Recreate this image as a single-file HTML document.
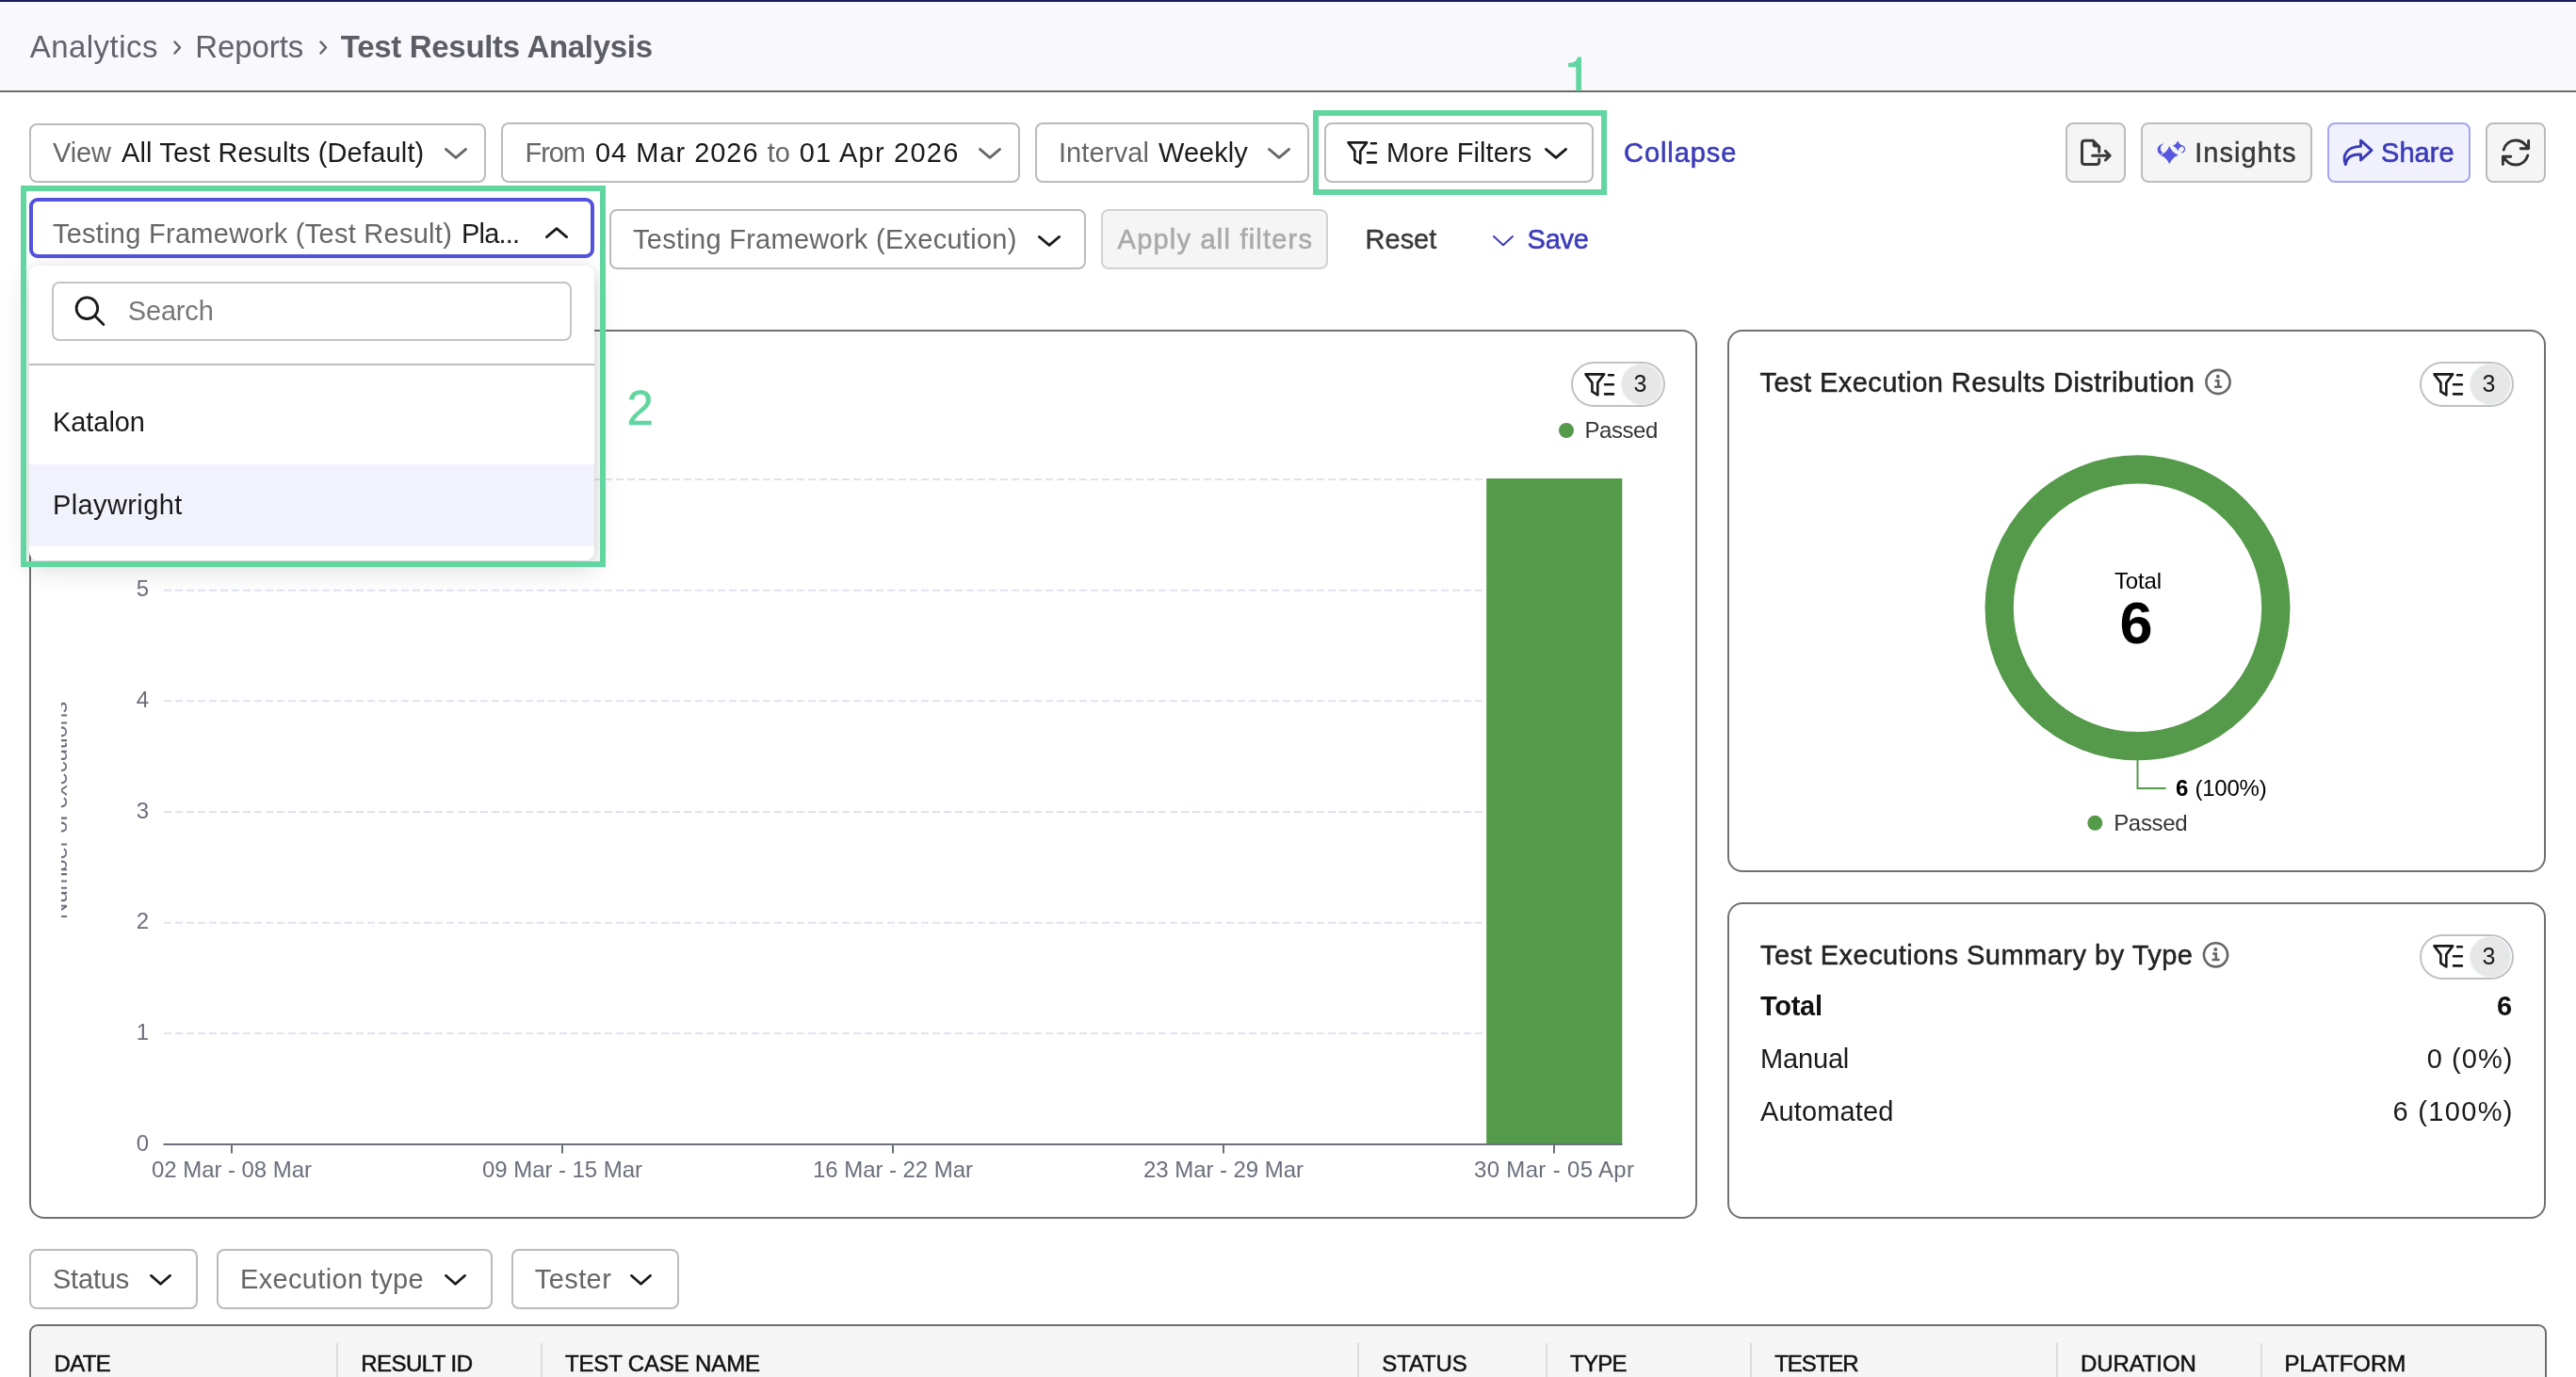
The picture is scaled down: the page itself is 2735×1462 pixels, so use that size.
<!DOCTYPE html>
<html lang="en"><head><meta charset="utf-8"><title>Test Results Analysis</title>
<style>
html,body{margin:0;padding:0;}
html{width:2735px;height:1462px;overflow:hidden;}
body{width:2735px;height:1462px;overflow:hidden;background:#fff;position:relative;font-family:"Liberation Sans",sans-serif;}
.t{position:absolute;white-space:pre;line-height:normal;}
.a{position:absolute;box-sizing:border-box;}
.dd{position:absolute;box-sizing:border-box;border:2px solid #bbbbbb;border-radius:8px;background:#fff;}
.btn{position:absolute;box-sizing:border-box;border:2px solid #bcbcbc;border-radius:8px;background:#f5f5f5;}
.card{position:absolute;box-sizing:border-box;border:2px solid #717171;border-radius:16px;background:#fff;}
.pill{position:absolute;box-sizing:border-box;border:2px solid #bdbdbd;border-radius:24px;background:#fff;width:100px;height:48px;border-color:#c2c2c2;}
.pill i{position:absolute;right:2px;top:1px;width:42px;height:42px;border-radius:50%;background:#e7e7e7;box-shadow:0 0 0 1px #e6f2f7;}
svg{position:absolute;overflow:visible;}
.hl{position:absolute;box-sizing:border-box;border:6px solid #62d6a1;}
.sep{position:absolute;width:2px;background:#dcdcdc;top:1426px;height:36px;}
#txt{position:absolute;left:0;top:0;width:2735px;height:1462px;will-change:transform;}

</style></head>
<body>
<div class="a" style="left:0;top:0;width:2735px;height:98px;background:#f8f8fd;border-top:2px solid #1b1b5e;border-bottom:2px solid #6b6b6b"></div>
<svg style="left:184px;top:43px" width="10" height="15" viewBox="0 0 10 15"><path d="M1.5 1.5 L7 7.5 L1.5 13.5" fill="none" stroke="#62636b" stroke-width="2.5" stroke-linecap="round" stroke-linejoin="round"/></svg>
<svg style="left:338.5px;top:43px" width="10" height="15" viewBox="0 0 10 15"><path d="M1.5 1.5 L7 7.5 L1.5 13.5" fill="none" stroke="#62636b" stroke-width="2.5" stroke-linecap="round" stroke-linejoin="round"/></svg>
<div class="card" style="left:30.5px;top:350px;width:1771px;height:944px"></div>
<svg style="left:0;top:0" width="1810" height="1300" viewBox="0 0 1810 1300">
<line x1="174" x2="1722" y1="509.0" y2="509.0" stroke="#dfe3ef" stroke-width="2" stroke-dasharray="8 4"/>
<line x1="174" x2="1722" y1="626.7" y2="626.7" stroke="#dfe3ef" stroke-width="2" stroke-dasharray="8 4"/>
<line x1="174" x2="1722" y1="744.3" y2="744.3" stroke="#dfe3ef" stroke-width="2" stroke-dasharray="8 4"/>
<line x1="174" x2="1722" y1="862.0" y2="862.0" stroke="#dfe3ef" stroke-width="2" stroke-dasharray="8 4"/>
<line x1="174" x2="1722" y1="979.7" y2="979.7" stroke="#dfe3ef" stroke-width="2" stroke-dasharray="8 4"/>
<line x1="174" x2="1722" y1="1097.3" y2="1097.3" stroke="#dfe3ef" stroke-width="2" stroke-dasharray="8 4"/>
<rect x="1578.2" y="508" width="144.1" height="707" fill="#55994a"/>
<line x1="173.5" x2="1722.5" y1="1215" y2="1215" stroke="#6b6f7b" stroke-width="2"/>
<line x1="246" x2="246" y1="1215" y2="1224.5" stroke="#6b6f7b" stroke-width="2"/>
<line x1="597" x2="597" y1="1215" y2="1224.5" stroke="#6b6f7b" stroke-width="2"/>
<line x1="948" x2="948" y1="1215" y2="1224.5" stroke="#6b6f7b" stroke-width="2"/>
<line x1="1299" x2="1299" y1="1215" y2="1224.5" stroke="#6b6f7b" stroke-width="2"/>
<line x1="1650" x2="1650" y1="1215" y2="1224.5" stroke="#6b6f7b" stroke-width="2"/>
<circle cx="1663" cy="457" r="8" fill="#55994a"/>
</svg>
<svg style="left:64.5px;top:700px;overflow:hidden;will-change:transform" width="14" height="320" viewBox="64.5 700 14 320"><text transform="translate(70.6,860.5) rotate(-90)" text-anchor="middle" font-family="Liberation Sans, sans-serif" font-size="24" fill="#6b6f7b" textLength="231">Number of executions</text></svg>
<div class="pill" style="left:1668px;top:384px"><i></i></div>
<svg style="left:1680.8px;top:394.7px" width="34" height="27" viewBox="0 0 34 27"><g fill="none" stroke="#1a1a1a" stroke-width="2.6" stroke-linecap="round" stroke-linejoin="round"><path d="M2.5 2.4 H22.1 L15.3 11.4 V24.5 L9.4 20.7 V11.4 Z"/><path d="M27 3.3 H31.9 M23 13.2 H31.9 M23 23.4 H31.9"/></g></svg>
<div class="card" style="left:1834px;top:350px;width:869px;height:576px"></div>
<div class="pill" style="left:2569px;top:384px"><i></i></div>
<svg style="left:2581.8px;top:394.7px" width="34" height="27" viewBox="0 0 34 27"><g fill="none" stroke="#1a1a1a" stroke-width="2.6" stroke-linecap="round" stroke-linejoin="round"><path d="M2.5 2.4 H22.1 L15.3 11.4 V24.5 L9.4 20.7 V11.4 Z"/><path d="M27 3.3 H31.9 M23 13.2 H31.9 M23 23.4 H31.9"/></g></svg>
<svg style="left:1834px;top:350px" width="869" height="576" viewBox="1834 350 869 576">
<circle cx="2269.5" cy="645.3" r="146.85" fill="none" stroke="#55994a" stroke-width="30.3"/>
<path d="M2269.5 807 V837 H2299.6" fill="none" stroke="#55994a" stroke-width="2"/>
<circle cx="2224.3" cy="873.8" r="8" fill="#55994a"/>
<g fill="none" stroke="#666" stroke-width="2.6" stroke-linecap="round"><circle cx="2355" cy="405.5" r="12.6"/><path d="M2352.8 404.3 H2355.3 V410.7 M2352.1 410.7 H2358.1"/></g><circle cx="2354.8" cy="399.8" r="2" fill="#666"/>
</svg>
<div class="card" style="left:1834px;top:958px;width:869px;height:336px"></div>
<div class="pill" style="left:2569px;top:991.5px"><i></i></div>
<svg style="left:2581.8px;top:1002.2px" width="34" height="27" viewBox="0 0 34 27"><g fill="none" stroke="#1a1a1a" stroke-width="2.6" stroke-linecap="round" stroke-linejoin="round"><path d="M2.5 2.4 H22.1 L15.3 11.4 V24.5 L9.4 20.7 V11.4 Z"/><path d="M27 3.3 H31.9 M23 13.2 H31.9 M23 23.4 H31.9"/></g></svg>
<svg style="left:1834px;top:958px" width="869" height="335" viewBox="1834 958 869 335">
<g fill="none" stroke="#666" stroke-width="2.6" stroke-linecap="round"><circle cx="2352.5" cy="1013.8" r="12.6"/><path d="M2350.3 1012.5999999999999 H2352.8 V1019.0 M2349.6 1019.0 H2355.6"/></g><circle cx="2352.3" cy="1008.0999999999999" r="2" fill="#666"/>
</svg>
<div class="dd" style="left:31px;top:131px;width:485px;height:63px"></div>
<svg style="left:472px;top:157px" width="24" height="12" viewBox="0 0 24 12"><path d="M1.35 1.35 L12.0 10.35 L22.65 1.35" fill="none" stroke="#666" stroke-width="2.7" stroke-linecap="round" stroke-linejoin="round"/></svg>
<div class="dd" style="left:532px;top:130px;width:551px;height:64px"></div>
<svg style="left:1039px;top:157px" width="24" height="12" viewBox="0 0 24 12"><path d="M1.35 1.35 L12.0 10.35 L22.65 1.35" fill="none" stroke="#666" stroke-width="2.7" stroke-linecap="round" stroke-linejoin="round"/></svg>
<div class="dd" style="left:1099px;top:130px;width:291px;height:64px"></div>
<svg style="left:1345.6px;top:157px" width="24" height="12" viewBox="0 0 24 12"><path d="M1.35 1.35 L12.0 10.35 L22.65 1.35" fill="none" stroke="#666" stroke-width="2.7" stroke-linecap="round" stroke-linejoin="round"/></svg>
<div class="dd" style="left:1406px;top:130px;width:286px;height:64px"></div>
<svg style="left:1428.6px;top:149.4px" width="34" height="27" viewBox="0 0 34 27"><g fill="none" stroke="#1a1a1a" stroke-width="2.6" stroke-linecap="round" stroke-linejoin="round"><path d="M2.5 2.4 H22.1 L15.3 11.4 V24.5 L9.4 20.7 V11.4 Z"/><path d="M27 3.3 H31.9 M23 13.2 H31.9 M23 23.4 H31.9"/></g></svg>
<svg style="left:1640px;top:157px" width="24" height="12" viewBox="0 0 24 12"><path d="M1.35 1.35 L12.0 10.35 L22.65 1.35" fill="none" stroke="#1a1a1a" stroke-width="2.7" stroke-linecap="round" stroke-linejoin="round"/></svg>
<div class="hl" style="left:1394px;top:117px;width:312px;height:90px"></div>
<div class="btn" style="left:2193px;top:130px;width:64px;height:64px"></div>
<svg style="left:2205px;top:144px" width="40" height="36" viewBox="2205 144 40 36"><g fill="none" stroke="#3a3a3a" stroke-width="3" stroke-linecap="round" stroke-linejoin="round"><path d="M2228.7 169 V171.6 Q2228.7 174.6 2225.7 174.6 H2213.5 Q2210.5 174.6 2210.5 171.6 V152.3 Q2210.5 149.3 2213.5 149.3 H2222.2 L2228.7 155.8 V161.3"/><path d="M2221.6 165.2 H2239.6 M2235.4 160.4 L2240.2 165.2 L2235.4 170"/></g><path d="M2221.6 149 L2229 156.4 H2224.2 Q2221.6 156.4 2221.6 153.8 Z" fill="#3a3a3a"/></svg>
<div class="btn" style="left:2273px;top:130px;width:182px;height:64px"></div>
<svg style="left:2285px;top:146px" width="40" height="32" viewBox="2285 146 40 32"><g fill="#5757e1"><path d="M2303.3 155.1 Q2305.9 162.1 2312.9 164.7 Q2305.9 167.29999999999998 2303.3 174.29999999999998 Q2300.7000000000003 167.29999999999998 2293.7000000000003 164.7 Q2300.7000000000003 162.1 2303.3 155.1 Z"/><path d="M2312.2 149.4 Q2313.7 153.3 2317.6 154.8 Q2313.7 156.3 2312.2 160.20000000000002 Q2310.7 156.3 2306.7999999999997 154.8 Q2310.7 153.3 2312.2 149.4 Z"/><path d="M2297.4 152.2 C2290.6 153.6 2288.2 159.8 2293.6 164.2 L2296.6 162.2 C2292.6 159.6 2293 155 2297.4 152.2 Z"/></g><path d="M2317.2 155.2 C2320.4 156.6 2320.4 160 2316.8 162" fill="none" stroke="#5757e1" stroke-width="1.3" stroke-linecap="round"/></svg>
<div class="btn" style="left:2471px;top:130px;width:152px;height:64px;background:#f1f1fd;border-color:#a5a5f1"></div>
<svg style="left:2485px;top:146px" width="36" height="32" viewBox="0 0 36 32"><path d="M21.5 3.2 L33 13.6 L21.5 24 V18 C13 17.6 6.5 19.6 5.4 28.6 C1.4 18.4 7 9.8 21.5 9.4 Z" fill="none" stroke="#3b3bb8" stroke-width="2.9" stroke-linecap="round" stroke-linejoin="round"/></svg>
<div class="btn" style="left:2639px;top:130px;width:64px;height:64px"></div>
<svg style="left:2654px;top:146px" width="34" height="32" viewBox="0 0 34 32"><g fill="none" stroke="#333" stroke-width="2.9" stroke-linecap="round" stroke-linejoin="round"><path d="M4.2 13 C6 6.6 11 3 17 3 C22.4 3 27 6 29.6 11.4 M30.6 3.4 V11.8 H22.2"/><path d="M29.8 19 C28 25.4 23 29 17 29 C11.6 29 7 26 4.4 20.6 M3.4 28.6 V20.2 H11.8"/></g></svg>
<div class="dd" style="left:646.5px;top:222px;width:506.5px;height:64px"></div>
<svg style="left:1101.5px;top:249.5px" width="24" height="12" viewBox="0 0 24 12"><path d="M1.35 1.35 L12.0 10.35 L22.65 1.35" fill="none" stroke="#1a1a1a" stroke-width="2.7" stroke-linecap="round" stroke-linejoin="round"/></svg>
<div class="btn" style="left:1169px;top:222px;width:241px;height:64px;border-color:#d2d2d2"></div>
<svg style="left:1585px;top:249.5px" width="22" height="11.5" viewBox="0 0 22 11.5"><path d="M1.0 1.0 L11.0 10.2 L21.0 1.0" fill="none" stroke="#3c3cba" stroke-width="2.0" stroke-linecap="round" stroke-linejoin="round"/></svg>
<div class="dd" style="left:31px;top:1326px;width:179px;height:64px"></div>
<svg style="left:159px;top:1353px" width="23" height="12" viewBox="0 0 23 12"><path d="M1.35 1.35 L11.5 10.35 L21.65 1.35" fill="none" stroke="#1a1a1a" stroke-width="2.7" stroke-linecap="round" stroke-linejoin="round"/></svg>
<div class="dd" style="left:230px;top:1326px;width:293px;height:64px"></div>
<svg style="left:471.7px;top:1353px" width="23" height="12" viewBox="0 0 23 12"><path d="M1.35 1.35 L11.5 10.35 L21.65 1.35" fill="none" stroke="#1a1a1a" stroke-width="2.7" stroke-linecap="round" stroke-linejoin="round"/></svg>
<div class="dd" style="left:543px;top:1326px;width:178px;height:64px"></div>
<svg style="left:669px;top:1353px" width="23" height="12" viewBox="0 0 23 12"><path d="M1.35 1.35 L11.5 10.35 L21.65 1.35" fill="none" stroke="#1a1a1a" stroke-width="2.7" stroke-linecap="round" stroke-linejoin="round"/></svg>
<div class="a" style="left:30.5px;top:1406px;width:2673px;height:56px;background:#f5f5f5;border:2px solid #6e6e6e;border-bottom:0;border-radius:9px 9px 0 0"></div>
<div class="sep" style="left:357px"></div>
<div class="sep" style="left:574px"></div>
<div class="sep" style="left:1441px"></div>
<div class="sep" style="left:1641px"></div>
<div class="sep" style="left:1858px"></div>
<div class="sep" style="left:2183px"></div>
<div class="sep" style="left:2400px"></div>
<div class="a" style="left:31px;top:282px;width:600px;height:313px;background:#fff;border-radius:9px;box-shadow:0 8px 30px rgba(0,0,0,.16),0 2px 8px rgba(0,0,0,.08)"></div>
<div class="a" style="left:31px;top:386px;width:600px;height:2px;background:#bdbdbd"></div>
<div class="a" style="left:31px;top:492.5px;width:600px;height:87px;background:#f2f2fc"></div>
<div class="dd" style="left:55px;top:299px;width:552px;height:63px;border-color:#c4c4c4"></div>
<svg style="left:78px;top:313px" width="36" height="36" viewBox="0 0 36 36"><g fill="none" stroke="#1a1a1a" stroke-width="2.8" stroke-linecap="round"><circle cx="14.4" cy="14.2" r="11.3"/><path d="M22.8 22.6 L31.9 31.5"/></g></svg>
<div class="a" style="left:30.5px;top:209.5px;width:600.5px;height:64.5px;border:4.5px solid #5252db;border-radius:9px;background:#fff"></div>
<svg style="left:579px;top:241px" width="24" height="12" viewBox="0 0 24 12"><path d="M1.35 10.65 L12.0 1.6500000000000001 L22.65 10.65" fill="none" stroke="#1a1a1a" stroke-width="2.7" stroke-linecap="round" stroke-linejoin="round"/></svg>
<div class="hl" style="left:22px;top:197px;width:621px;height:405px"></div>
<svg style="left:1660px;top:56px" width="24" height="44" viewBox="1660 56 24 44"><path d="M1673.3 96.6 V71.2 H1665.1 V66.9 C1670.4 66.9 1673.8 65.3 1675 60.5 H1679 V96.6 Z" fill="#62d6a1"/></svg>
<div id="txt">
<span class="t" style="left:31.80px;top:31.00px;font-size:33px;color:#62636b;letter-spacing:0.442px;">Analytics</span>
<span class="t" style="left:207.30px;top:31.00px;font-size:33px;color:#62636b;letter-spacing:-0.110px;">Reports</span>
<span class="t" style="left:361.80px;top:31.00px;font-size:33px;color:#5d5e65;font-weight:700;letter-spacing:-0.313px;">Test Results Analysis</span>
<span class="t" style="left:55.90px;top:146.00px;font-size:29px;color:#666666;letter-spacing:-0.081px;">View</span>
<span class="t" style="left:128.90px;top:146.00px;font-size:29px;color:#1a1a1a;letter-spacing:0.177px;">All Test Results (Default)</span>
<span class="t" style="left:557.50px;top:146.00px;font-size:29px;color:#666666;letter-spacing:-1.057px;">From</span>
<span class="t" style="left:632.00px;top:146.00px;font-size:29px;color:#1a1a1a;letter-spacing:0.977px;">04 Mar 2026</span>
<span class="t" style="left:814.80px;top:146.00px;font-size:29px;color:#666666;letter-spacing:-0.188px;">to</span>
<span class="t" style="left:848.70px;top:146.00px;font-size:29px;color:#1a1a1a;letter-spacing:1.218px;">01 Apr 2026</span>
<span class="t" style="left:1123.90px;top:146.00px;font-size:29px;color:#666666;letter-spacing:0.142px;">Interval</span>
<span class="t" style="left:1230.00px;top:146.00px;font-size:29px;color:#1a1a1a;letter-spacing:0.047px;">Weekly</span>
<span class="t" style="left:1472.00px;top:146.00px;font-size:29px;color:#1a1a1a;letter-spacing:0.111px;">More Filters</span>
<span class="t" style="left:1724.00px;top:146.00px;font-size:29px;color:#3c3cba;-webkit-text-stroke:0.6px #3c3cba;letter-spacing:0.937px;">Collapse</span>
<span class="t" style="left:2330.20px;top:146.00px;font-size:29px;color:#383838;-webkit-text-stroke:0.45px #383838;letter-spacing:1.050px;">Insights</span>
<span class="t" style="left:2528.00px;top:146.00px;font-size:29px;color:#3b3bb8;-webkit-text-stroke:0.6px #3b3bb8;letter-spacing:0.052px;">Share</span>
<span class="t" style="left:55.90px;top:232.00px;font-size:29px;color:#666666;letter-spacing:0.271px;">Testing Framework (Test Result)</span>
<span class="t" style="left:490.00px;top:232.00px;font-size:29px;color:#1a1a1a;letter-spacing:-0.819px;">Pla...</span>
<span class="t" style="left:672.00px;top:238.00px;font-size:29px;color:#666666;letter-spacing:0.275px;">Testing Framework (Execution)</span>
<span class="t" style="left:1186.60px;top:238.00px;font-size:29px;color:#aaaaaa;-webkit-text-stroke:0.6px #aaaaaa;letter-spacing:1.214px;">Apply all filters</span>
<span class="t" style="left:1449.60px;top:238.00px;font-size:29px;color:#383838;-webkit-text-stroke:0.4px #383838;letter-spacing:-0.016px;">Reset</span>
<span class="t" style="left:1621.60px;top:238.00px;font-size:29px;color:#3c3cba;-webkit-text-stroke:0.6px #3c3cba;letter-spacing:-0.303px;">Save</span>
<span class="t" style="left:135.80px;top:314.00px;font-size:29px;color:#777;letter-spacing:-0.178px;">Search</span>
<span class="t" style="left:55.90px;top:432.00px;font-size:29px;color:#1a1a1a;letter-spacing:-0.043px;">Katalon</span>
<span class="t" style="left:55.90px;top:520.00px;font-size:29px;color:#1a1a1a;letter-spacing:0.402px;">Playwright</span>
<span class="t" style="left:665.50px;top:404.00px;font-size:51px;color:#62d6a1;-webkit-text-stroke:0.5px #62d6a1;">2</span>
<span class="t" style="left:144.70px;top:611.00px;font-size:24px;color:#6b6f7b;">5</span>
<span class="t" style="left:144.70px;top:729.00px;font-size:24px;color:#6b6f7b;">4</span>
<span class="t" style="left:144.70px;top:847.00px;font-size:24px;color:#6b6f7b;">3</span>
<span class="t" style="left:144.70px;top:964.00px;font-size:24px;color:#6b6f7b;">2</span>
<span class="t" style="left:144.70px;top:1082.00px;font-size:24px;color:#6b6f7b;">1</span>
<span class="t" style="left:144.70px;top:1200.00px;font-size:24px;color:#6b6f7b;">0</span>
<span class="t" style="left:161.00px;top:1228.00px;font-size:24px;color:#6b6f7b;letter-spacing:-0.051px;">02 Mar - 08 Mar</span>
<span class="t" style="left:512.00px;top:1228.00px;font-size:24px;color:#6b6f7b;letter-spacing:-0.051px;">09 Mar - 15 Mar</span>
<span class="t" style="left:863.00px;top:1228.00px;font-size:24px;color:#6b6f7b;letter-spacing:-0.051px;">16 Mar - 22 Mar</span>
<span class="t" style="left:1214.00px;top:1228.00px;font-size:24px;color:#6b6f7b;letter-spacing:-0.051px;">23 Mar - 29 Mar</span>
<span class="t" style="left:1565.00px;top:1228.00px;font-size:24px;color:#6b6f7b;letter-spacing:0.327px;">30 Mar - 05 Apr</span>
<span class="t" style="left:1682.40px;top:443.00px;font-size:24px;color:#333;letter-spacing:-0.433px;">Passed</span>
<span class="t" style="left:1734.40px;top:393.00px;font-size:25px;color:#1a1a1a;">3</span>
<span class="t" style="left:1868.60px;top:390.00px;font-size:29px;color:#222;-webkit-text-stroke:0.5px #222;letter-spacing:0.439px;">Test Execution Results Distribution</span>
<span class="t" style="left:2635.40px;top:393.00px;font-size:25px;color:#1a1a1a;">3</span>
<span class="t" style="left:2245.00px;top:603.00px;font-size:24px;color:#000;letter-spacing:-0.176px;">Total</span>
<span class="t" style="left:2250.60px;top:625.00px;font-size:63px;color:#000;font-weight:700;">6</span>
<span class="t" style="left:2310.00px;top:823.00px;font-size:24px;color:#000;font-weight:700;">6</span>
<span class="t" style="left:2330.50px;top:823.00px;font-size:24px;color:#000;letter-spacing:-0.235px;">(100%)</span>
<span class="t" style="left:2244.20px;top:860.00px;font-size:24px;color:#333;letter-spacing:-0.332px;">Passed</span>
<span class="t" style="left:1869.00px;top:998.00px;font-size:29px;color:#222;-webkit-text-stroke:0.5px #222;letter-spacing:0.489px;">Test Executions Summary by Type</span>
<span class="t" style="left:2635.40px;top:1001.00px;font-size:25px;color:#1a1a1a;">3</span>
<span class="t" style="left:1869.00px;top:1052.00px;font-size:29px;color:#111;font-weight:700;letter-spacing:-0.281px;">Total</span>
<span class="t" style="left:2651.00px;top:1052.00px;font-size:29px;color:#111;font-weight:700;">6</span>
<span class="t" style="left:1869.00px;top:1108.00px;font-size:29px;color:#1a1a1a;letter-spacing:-0.165px;">Manual</span>
<span class="t" style="left:2576.80px;top:1108.00px;font-size:29px;color:#1a1a1a;letter-spacing:1.056px;">0 (0%)</span>
<span class="t" style="left:1869.00px;top:1164.00px;font-size:29px;color:#1a1a1a;letter-spacing:0.154px;">Automated</span>
<span class="t" style="left:2540.50px;top:1164.00px;font-size:29px;color:#1a1a1a;letter-spacing:1.333px;">6 (100%)</span>
<span class="t" style="left:55.90px;top:1342.00px;font-size:29px;color:#666666;letter-spacing:-0.164px;">Status</span>
<span class="t" style="left:255.00px;top:1342.00px;font-size:29px;color:#666666;letter-spacing:0.344px;">Execution type</span>
<span class="t" style="left:567.80px;top:1342.00px;font-size:29px;color:#666666;letter-spacing:0.403px;">Tester</span>
<span class="t" style="left:57.60px;top:1434.00px;font-size:24px;color:#111;-webkit-text-stroke:0.5px #111;letter-spacing:-0.711px;">DATE</span>
<span class="t" style="left:383.30px;top:1434.00px;font-size:24px;color:#111;-webkit-text-stroke:0.5px #111;letter-spacing:-0.555px;">RESULT ID</span>
<span class="t" style="left:600.00px;top:1434.00px;font-size:24px;color:#111;-webkit-text-stroke:0.5px #111;letter-spacing:-0.149px;">TEST CASE NAME</span>
<span class="t" style="left:1467.30px;top:1434.00px;font-size:24px;color:#111;-webkit-text-stroke:0.5px #111;letter-spacing:-0.145px;">STATUS</span>
<span class="t" style="left:1667.00px;top:1434.00px;font-size:24px;color:#111;-webkit-text-stroke:0.5px #111;letter-spacing:-0.696px;">TYPE</span>
<span class="t" style="left:1884.20px;top:1434.00px;font-size:24px;color:#111;-webkit-text-stroke:0.5px #111;letter-spacing:-1.078px;">TESTER</span>
<span class="t" style="left:2209.00px;top:1434.00px;font-size:24px;color:#111;-webkit-text-stroke:0.5px #111;letter-spacing:-0.109px;">DURATION</span>
<span class="t" style="left:2425.40px;top:1434.00px;font-size:24px;color:#111;-webkit-text-stroke:0.5px #111;">PLATFORM</span>
</div>
</body></html>
